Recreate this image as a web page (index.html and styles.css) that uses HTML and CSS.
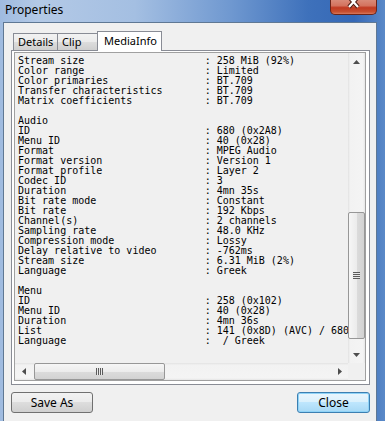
FILE: index.html
```html
<!DOCTYPE html>
<html lang="en">
<head>
    <meta charset="UTF-8">
    <title>Properties</title>
    <link rel="stylesheet" href="styles.css">
</head>
<body>
    <div class="window">
        <div class="titlebar">
            <span class="title">Properties</span>
            <button class="close-x" aria-label="Close">
                <svg width="16" height="10" viewBox="0 0 16 10">
                    <path d="M3 -3 L12 7 M12 -3 L3 7" stroke="#4a1a12" stroke-width="4.2" fill="none"/>
                    <path d="M3 -3 L12 7 M12 -3 L3 7" stroke="#fff" stroke-width="2.2" fill="none"/>
                </svg>
            </button>
        </div>
        <div class="client">
            <div class="tabs">
                <div class="tab tab-details">Details</div>
                <div class="tab tab-clip">Clip</div>
                <div class="tab tab-info active">MediaInfo</div>
            </div>
            <div class="panel">
                <div class="listbox">
                    <div class="text">
                        <div class="row"><span class="k">Stream size</span>: 258 MiB (92%)</div>
                        <div class="row"><span class="k">Color range</span>: Limited</div>
                        <div class="row"><span class="k">Color primaries</span>: BT.709</div>
                        <div class="row"><span class="k">Transfer characteristics</span>: BT.709</div>
                        <div class="row"><span class="k">Matrix coefficients</span>: BT.709</div>
                        <div class="row"> </div>
                        <div class="row">Audio</div>
                        <div class="row"><span class="k">ID</span>: 680 (0x2A8)</div>
                        <div class="row"><span class="k">Menu ID</span>: 40 (0x28)</div>
                        <div class="row"><span class="k">Format</span>: MPEG Audio</div>
                        <div class="row"><span class="k">Format version</span>: Version 1</div>
                        <div class="row"><span class="k">Format profile</span>: Layer 2</div>
                        <div class="row"><span class="k">Codec ID</span>: 3</div>
                        <div class="row"><span class="k">Duration</span>: 4mn 35s</div>
                        <div class="row"><span class="k">Bit rate mode</span>: Constant</div>
                        <div class="row"><span class="k">Bit rate</span>: 192 Kbps</div>
                        <div class="row"><span class="k">Channel(s)</span>: 2 channels</div>
                        <div class="row"><span class="k">Sampling rate</span>: 48.0 KHz</div>
                        <div class="row"><span class="k">Compression mode</span>: Lossy</div>
                        <div class="row"><span class="k">Delay relative to video</span>: -762ms</div>
                        <div class="row"><span class="k">Stream size</span>: 6.31 MiB (2%)</div>
                        <div class="row"><span class="k">Language</span>: Greek</div>
                        <div class="row"> </div>
                        <div class="row">Menu</div>
                        <div class="row"><span class="k">ID</span>: 258 (0x102)</div>
                        <div class="row"><span class="k">Menu ID</span>: 40 (0x28)</div>
                        <div class="row"><span class="k">Duration</span>: 4mn 36s</div>
                        <div class="row"><span class="k">List</span>: 141 (0x8D) (AVC) / 680 (0x2A8) (MPEG Audio, Greek)</div>
                        <div class="row"><span class="k">Language</span>:  / Greek</div>
                    </div>
                    <div class="vscroll">
                        <div class="arrow">
                            <svg width="7" height="4" viewBox="0 0 7 4"><polygon points="3.5,0 7,4 0,4" fill="#4d4d4d"/></svg>
                        </div>
                        <div class="vthumb"><span class="grip-h"></span></div>
                        <div class="arrow arrow-end">
                            <svg width="7" height="4" viewBox="0 0 7 4"><polygon points="0,0 7,0 3.5,4" fill="#4d4d4d"/></svg>
                        </div>
                    </div>
                    <div class="hscroll">
                        <div class="arrow">
                            <svg width="4" height="7" viewBox="0 0 4 7"><polygon points="4,0 4,7 0,3.5" fill="#4d4d4d"/></svg>
                        </div>
                        <div class="hthumb"><span class="grip-v"></span></div>
                        <div class="arrow arrow-end">
                            <svg width="4" height="7" viewBox="0 0 4 7"><polygon points="0,0 4,3.5 0,7" fill="#4d4d4d"/></svg>
                        </div>
                    </div>
                    <div class="corner"></div>
                </div>
            </div>
            <div class="buttons">
                <button class="btn btn-save">Save As</button>
                <button class="btn btn-close">Close</button>
            </div>
        </div>
    </div>
</body>
</html>
```

FILE: styles.css
```css
html, body {
    margin: 0;
    padding: 0;
}
body {
    width: 385px;
    height: 421px;
    overflow: hidden;
    font-family: "Noto Sans", "Open Sans", sans-serif;
}
.window {
    width: 385px;
    height: 421px;
    display: flex;
    flex-direction: column;
    background: linear-gradient(90deg, #9fbbe0 0, #b3c9e6 10%, #a4bfe2 35%, #6f98d0 60%, #3e71bb 80%, #3568b6 92%, #5a89c8 100%);
}
.titlebar {
    height: 22px;
    flex: none;
    display: flex;
    align-items: flex-start;
}
.title {
    font-size: 12px;
    line-height: 16px;
    color: #000;
    margin: 2px 0 0 5px;
}
.close-x {
    margin: 0 8px 0 auto;
    width: 47px;
    height: 15px;
    padding: 0;
    display: flex;
    justify-content: center;
    align-items: flex-start;
    border: 1px solid #6b2418;
    border-top: none;
    border-radius: 0 0 5px 5px;
    background: linear-gradient(180deg, #d98a78 0, #d4735e 40%, #c13a22 55%, #c8502f 85%, #d97a5e 100%);
}
.client {
    flex: 1;
    margin: 0 8px 0 3px;
    border: 1px solid #5f7894;
    border-bottom: none;
    background: #f0f0f0;
    padding: 8px 6px 0 7px;
    display: flex;
    flex-direction: column;
}
.tabs {
    height: 19px;
    display: flex;
    align-items: flex-end;
    padding-left: 2px;
}
.tab {
    box-sizing: border-box;
    height: 17px;
    border: 1px solid #898c95;
    border-bottom: none;
    border-right: none;
    background: linear-gradient(180deg, #f2f2f2 0, #ebebeb 50%, #dddddd 50%, #cfcfcf 100%);
    font-size: 11px;
    line-height: 16px;
    padding-left: 4px;
    color: #000;
    white-space: nowrap;
}
.tab-details {
    width: 44px;
}
.tab-clip {
    width: 40px;
}
.tab.active {
    width: 65px;
    height: 20px;
    margin-bottom: -1px;
    position: relative;
    z-index: 1;
    background: #fff;
    border-right: 1px solid #898c95;
    padding-left: 6px;
    line-height: 17px;
}
.panel {
    box-sizing: border-box;
    height: 335px;
    flex: none;
    border: 1px solid #898c95;
    background: #fff;
    padding: 1px 3px 3px 2px;
    display: flex;
}
.listbox {
    flex: 1;
    border: 1px solid #a0a0a0;
    display: grid;
    grid-template-columns: 1fr 17px;
    grid-template-rows: 1fr 17px;
    background: #f0f0f0;
    min-width: 0;
    min-height: 0;
}
.text {
    overflow: hidden;
    padding: 3px 0 0 3px;
    font-family: "DejaVu Sans Mono", "Liberation Mono", monospace;
    font-size: 10px;
    line-height: 10px;
    color: #000;
    min-height: 0;
}
.row {
    height: 10px;
    white-space: pre;
}
.k {
    display: inline-block;
    width: 31ch;
}
.vscroll {
    display: flex;
    flex-direction: column;
    background: linear-gradient(90deg, #e2e2e2 0, #f2f2f2 12%, #f4f4f4 88%, #e6e6e6 100%);
}
.hscroll {
    display: flex;
    background: linear-gradient(180deg, #e2e2e2 0, #f2f2f2 12%, #f4f4f4 88%, #e6e6e6 100%);
}
.corner {
    background: #f0f0f0;
}
.arrow {
    width: 17px;
    height: 17px;
    flex: none;
    display: flex;
    align-items: center;
    justify-content: center;
}
.arrow-end {
    margin-top: auto;
}
.hscroll .arrow-end {
    margin-top: 0;
    margin-left: auto;
}
.vthumb {
    box-sizing: border-box;
    margin: 142px 0 0 0;
    height: 127px;
    border: 1px solid #979797;
    border-radius: 2px;
    background: linear-gradient(90deg, #f6f6f6 0, #ececec 50%, #dcdcdc 50%, #d2d2d2 100%);
    display: flex;
    align-items: center;
    justify-content: center;
}
.hthumb {
    box-sizing: border-box;
    margin-left: 2px;
    width: 131px;
    border: 1px solid #979797;
    border-radius: 2px;
    background: linear-gradient(180deg, #f6f6f6 0, #ececec 50%, #dcdcdc 50%, #d2d2d2 100%);
    display: flex;
    align-items: center;
    justify-content: center;
}
.grip-h {
    width: 7px;
    height: 7px;
    background: repeating-linear-gradient(180deg, #5b5b5b 0, #5b5b5b 1px, #e8e8e8 1px, #e8e8e8 2px);
}
.grip-v {
    width: 7px;
    height: 7px;
    background: repeating-linear-gradient(90deg, #5b5b5b 0, #5b5b5b 1px, #e8e8e8 1px, #e8e8e8 2px);
}
.buttons {
    display: flex;
    justify-content: space-between;
    margin-top: 7px;
}
.btn {
    box-sizing: border-box;
    height: 21px;
    padding: 0;
    border: 1px solid #707070;
    border-radius: 3px;
    background: linear-gradient(180deg, #f2f2f2 0, #ebebeb 50%, #dddddd 50%, #cfcfcf 100%);
    font-family: "Noto Sans", "Open Sans", sans-serif;
    font-size: 12px;
    line-height: 18px;
    color: #000;
}
.btn-save {
    width: 82px;
}
.btn-close {
    width: 73px;
    border-color: #3c7fb1;
    background: linear-gradient(180deg, #eaf6fd 0, #d9f0fc 50%, #bee6fd 50%, #a7d9f5 100%);
    box-shadow: inset 0 0 0 1px #8fd3f7;
}
```
